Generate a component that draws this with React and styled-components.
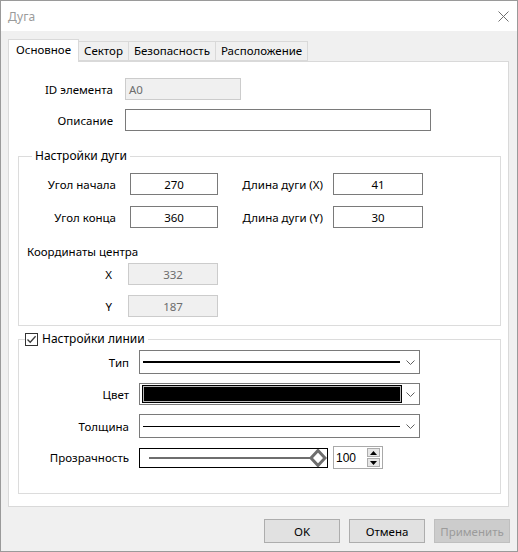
import React from 'react'
import styled, { createGlobalStyle } from 'styled-components'

const Global = createGlobalStyle`
    body{
        margin:0;
        background:#ffffff;
        font-family:"Noto Sans", "DejaVu Sans", sans-serif;
        font-size:11.5px;
        color:#000;
    }
    *{ box-sizing:border-box; }
`

const Window = styled.div`
    width:518px;
    height:552px;
    border:1px solid #9a9a9a;
    display:flex;
    flex-direction:column;
    background:#f0f0f0;
`

const TitleBar = styled.div`
    height:30px;
    background:#ffffff;
    display:flex;
    align-items:center;
    justify-content:space-between;
    padding:0 8px 0 7px;
    color:#9b9b9b;
    font-size:12px;
`

const Body = styled.div`
    flex:1;
    display:flex;
    flex-direction:column;
    padding:8px 8px 8px 7px;
`

const TabStrip = styled.div`
    height:22px;
    display:flex;
    align-items:flex-end;
`

const Tab = styled.div`
    height:${p => p.active ? '23px' : '20px'};
    margin-bottom:${p => p.active ? '-1px' : '0'};
    margin-left:${p => p.first ? '0' : '-1px'};
    padding:0 ${p => p.active ? '7px' : '5px'};
    border:1px solid #d9d9d9;
    border-bottom:${p => p.active ? 'none' : '1px solid #d9d9d9'};
    background:${p => p.active ? '#ffffff' : '#f0f0f0'};
    position:relative;
    z-index:${p => p.active ? 2 : 1};
    display:flex;
    align-items:${p => p.active ? 'flex-start' : 'center'};
    padding-top:${p => p.active ? '1px' : '0'};
    line-height:18px;
    white-space:nowrap;
`

const Panel = styled.div`
    height:446px;
    background:#ffffff;
    border:1px solid #d9d9d9;
    padding:16px 7px 12px 9px;
    display:flex;
    flex-direction:column;
`

const Row = styled.div`
    display:flex;
    align-items:center;
    height:${p => p.h || 22}px;
    margin-top:${p => p.mt || 0}px;
`

const Label = styled.div`
    width:${p => p.w}px;
    margin-left:${p => p.ml || 0}px;
    margin-right:${p => p.mr || 0}px;
    text-align:${p => p.left ? 'left' : 'right'};
    white-space:nowrap;
    flex:none;
`

const TextBox = styled.div`
    width:${p => p.w}px;
    height:22px;
    flex:none;
    border:1px solid ${p => p.disabled ? '#cccccc' : '#7a7a7a'};
    background:${p => p.disabled ? '#f0f0f0' : '#ffffff'};
    color:${p => p.disabled ? '#6d6d6d' : '#000'};
    display:flex;
    align-items:center;
    justify-content:${p => p.center ? 'center' : 'flex-start'};
    padding:0 3px;
`

const Group = styled.fieldset`
    margin:${p => p.mt || 0}px 0 0 0;
    padding:0 0 ${p => p.pb}px 0;
    border:1px solid #dcdcdc;
    min-width:0;
    display:flex;
    flex-direction:column;
`

const Legend = styled.legend`
    margin-left:${p => p.ml}px;
    padding:0 3px 0 ${p => p.pl}px;
    line-height:16px;
    height:16px;
    display:flex;
    align-items:center;
    gap:4px;
    font-size:12px;
`

const GroupBody = styled.div`
    padding-top:${p => p.pt}px;
    display:flex;
    flex-direction:column;
`

const SubTitle = styled.div`
    margin:16px 0 0 8px;
    line-height:16px;
`

const Check = styled.span`
    width:13px;
    height:13px;
    border:1px solid #333333;
    background:#ffffff;
    display:flex;
    align-items:center;
    justify-content:center;
`

const Combo = styled.div`
    width:281px;
    height:${p => p.h}px;
    flex:none;
    border:1px solid #7a7a7a;
    background:#ffffff;
    display:flex;
    align-items:stretch;
`

const ComboValue = styled.div`
    flex:1;
    display:flex;
    align-items:center;
    padding:0 2px 0 3px;
`

const LineSample = styled.div`
    flex:1;
    height:${p => p.t}px;
    background:#000;
`

const Swatch = styled.div`
    flex:1;
    margin:1px 0 1px 2px;
    background:#000;
    border:1px solid #000;
    box-shadow:inset 0 0 0 1px #b8b8b8;
`

const Chevron = styled.div`
    width:17px;
    display:flex;
    align-items:center;
    justify-content:center;
`

const Slider = styled.div`
    width:189px;
    height:20px;
    flex:none;
    border:1px solid #000;
    background:#fff;
    display:flex;
`

const Spin = styled.div`
    width:50px;
    height:23px;
    margin-left:5px;
    flex:none;
    border:1px solid #a9a9a9;
    background:#fff;
    display:flex;
    align-items:center;
    justify-content:space-between;
    padding:0 2px 0 2px;
    font-family:"Liberation Sans", Arial, sans-serif;
    font-size:12px;
`

const SpinButtons = styled.div`
    display:flex;
    flex-direction:column;
    gap:1px;
`

const SpinButton = styled.div`
    width:13px;
    height:9px;
    background:#e6e6e6;
    border:1px solid #adadad;
    display:flex;
    align-items:center;
    justify-content:center;
`

const ButtonBar = styled.div`
    margin-top:12px;
    margin-right:-1px;
    display:flex;
    justify-content:flex-end;
    gap:9px;
`

const Button = styled.div`
    width:76px;
    height:24px;
    border:1px solid ${p => p.disabled ? '#bfbfbf' : '#adadad'};
    background:${p => p.disabled ? '#cccccc' : '#e1e1e1'};
    color:${p => p.disabled ? '#9b9b9b' : '#000'};
    display:flex;
    align-items:center;
    justify-content:center;
`

const ChevronIcon = () => (
    <svg width="9" height="5" viewBox="0 0 9 5">
        <path d="M0.5 0.5 L4.5 4.5 L8.5 0.5" fill="none" stroke="#606060" strokeWidth="1" />
    </svg>
)

const ComboBox = ({ h, children }) => (
    <Combo h={h}>
        {children}
        <Chevron><ChevronIcon /></Chevron>
    </Combo>
)

export default function App() {
    const tabs = ['Основное', 'Сектор', 'Безопасность', 'Расположение']

    return (
        <>
            <Global />
            <Window>
                <TitleBar>
                    <span>Дуга</span>
                    <svg width="11" height="11" viewBox="0 0 11 11">
                        <path d="M0.5 0.5 L10.5 10.5 M10.5 0.5 L0.5 10.5" stroke="#6f6f6f" strokeWidth="1" />
                    </svg>
                </TitleBar>
                <Body>
                    <TabStrip>
                        {tabs.map((t, i) => (
                            <Tab key={t} active={i === 0} first={i === 0}>{t}</Tab>
                        ))}
                    </TabStrip>
                    <Panel>
                        <Row>
                            <Label w={95} mr={12}>ID элемента</Label>
                            <TextBox w={116} disabled>A0</TextBox>
                        </Row>
                        <Row mt={9}>
                            <Label w={95} mr={12}>Описание</Label>
                            <TextBox w={306} />
                        </Row>

                        <Group mt={17} pb={8}>
                            <Legend ml={13} pl={3}>Настройки дуги</Legend>
                            <GroupBody pt={9}>
                                <Row>
                                    <Label w={97} mr={14}>Угол начала</Label>
                                    <TextBox w={88} center>270</TextBox>
                                    <Label w={105} mr={10}>Длина дуги (X)</Label>
                                    <TextBox w={90} center>41</TextBox>
                                </Row>
                                <Row mt={11}>
                                    <Label w={97} mr={14}>Угол конца</Label>
                                    <TextBox w={88} center>360</TextBox>
                                    <Label w={105} mr={10}>Длина дуги (Y)</Label>
                                    <TextBox w={90} center>30</TextBox>
                                </Row>
                                <SubTitle>Координаты центра</SubTitle>
                                <Row mt={3}>
                                    <Label w={93} mr={16}>X</Label>
                                    <TextBox w={90} center disabled>332</TextBox>
                                </Row>
                                <Row mt={10}>
                                    <Label w={93} mr={16}>Y</Label>
                                    <TextBox w={90} center disabled>187</TextBox>
                                </Row>
                            </GroupBody>
                        </Group>

                        <Group mt={5} pb={24}>
                            <Legend ml={6} pl={0}>
                                <Check>
                                    <svg width="11" height="11" viewBox="0 0 11 11">
                                        <path d="M1.5 5.5 L4.2 8.3 L9.6 2.2" fill="none" stroke="#3a3a3a" strokeWidth="1.3" />
                                    </svg>
                                </Check>
                                Настройки линии
                            </Legend>
                            <GroupBody pt={3}>
                                <Row h={24}>
                                    <Label w={110} mr={10}>Тип</Label>
                                    <ComboBox h={24}>
                                        <ComboValue><LineSample t={2} /></ComboValue>
                                    </ComboBox>
                                </Row>
                                <Row h={22} mt={9}>
                                    <Label w={110} mr={10}>Цвет</Label>
                                    <ComboBox h={22}>
                                        <Swatch />
                                    </ComboBox>
                                </Row>
                                <Row h={24} mt={9}>
                                    <Label w={110} mr={10}>Толщина</Label>
                                    <ComboBox h={24}>
                                        <ComboValue><LineSample t={1} /></ComboValue>
                                    </ComboBox>
                                </Row>
                                <Row h={23} mt={8}>
                                    <Label w={110} mr={10}>Прозрачность</Label>
                                    <Slider>
                                        <svg width="187" height="18" viewBox="0 0 187 18">
                                            <rect x="9" y="8" width="165" height="2" fill="#6e6e6e" />
                                            <path d="M178 1.5 L185 9 L178 16.5 L171 9 Z" fill="#ffffff" stroke="#6e6e6e" strokeWidth="3" strokeLinejoin="miter" />
                                        </svg>
                                    </Slider>
                                    <Spin>
                                        <span>100</span>
                                        <SpinButtons>
                                            <SpinButton>
                                                <svg width="7" height="4" viewBox="0 0 7 4"><path d="M0 4 L3.5 0 L7 4 Z" fill="#000" /></svg>
                                            </SpinButton>
                                            <SpinButton>
                                                <svg width="7" height="4" viewBox="0 0 7 4"><path d="M0 0 L3.5 4 L7 0 Z" fill="#000" /></svg>
                                            </SpinButton>
                                        </SpinButtons>
                                    </Spin>
                                </Row>
                            </GroupBody>
                        </Group>
                    </Panel>
                    <ButtonBar>
                        <Button>OK</Button>
                        <Button>Отмена</Button>
                        <Button disabled>Применить</Button>
                    </ButtonBar>
                </Body>
            </Window>
        </>
    )
}
